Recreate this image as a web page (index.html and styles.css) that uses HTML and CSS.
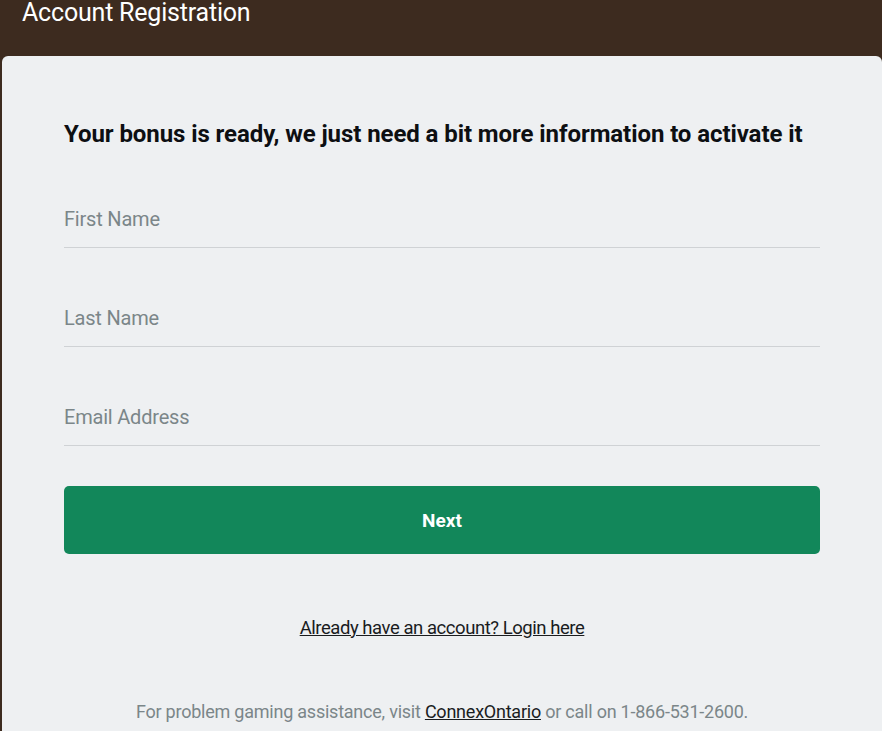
FILE: index.html
```html
<!DOCTYPE html>
<html lang="en">
<head>
<meta charset="utf-8">
<title>Account Registration</title>
<link rel="stylesheet" href="styles.css">
</head>
<body>
<header class="topbar">
  <h1 class="topbar-title">Account Registration</h1>
</header>
<main class="card">
  <h2 class="lead">Your bonus is ready, we just need a bit more information to activate it</h2>
  <form class="form">
    <input class="input" type="text" placeholder="First Name">
    <input class="input" type="text" placeholder="Last Name">
    <input class="input" type="email" placeholder="Email Address">
    <button class="btn" type="button">Next</button>
  </form>
  <p class="login"><a href="#">Already have an account? Login here</a></p>
  <p class="help">For problem gaming assistance, visit <a href="#">ConnexOntario</a> or call on 1-866-531-2600.</p>
</main>
</body>
</html>
```
FILE: styles.css
```css
* { box-sizing: border-box; }
html, body { margin: 0; padding: 0; }
body {
  background: #3d2b1f;
  font-family: Roboto, "Noto Sans", sans-serif;
  overflow: hidden;
  height: 731px;
}
.topbar {
  height: 56px;
  padding: 0 0 0 22px;
}
.topbar-title {
  margin: 0;
  color: #ffffff;
  font-weight: 400;
  font-size: 25px;
  line-height: 26px;
  letter-spacing: -0.2px;
}
.card {
  margin-left: 2px;
  width: 880px;
  height: 675px;
  background: #eef0f2;
  border-radius: 6px 6px 0 0;
  padding: 63px 62px 0;
}
.lead {
  margin: 0;
  font-size: 24px;
  line-height: 30px;
  font-weight: 700;
  color: #0d0f12;
  white-space: nowrap;
  letter-spacing: -0.08px;
}
.form {
  margin-top: 40px;
  display: flex;
  flex-direction: column;
  gap: 40px;
}
.input {
  width: 100%;
  height: 59px;
  border: 0;
  border-bottom: 1px solid #cfd2d5;
  background: transparent;
  font-family: inherit;
  font-size: 20px;
  letter-spacing: -0.2px;
  padding: 1px 0 0;
  color: #222;
  outline: none;
}
.input::placeholder { color: #7b8689; }
.btn {
  height: 68px;
  border: 0;
  border-radius: 5px;
  background: #12875a;
  color: #fff;
  font-family: inherit;
  font-weight: 700;
  font-size: 19px;
}
.login {
  margin: 60.7px 0 0;
  text-align: center;
  font-size: 18.5px;
  line-height: 26px;
  letter-spacing: -0.45px;
}
.login a { color: #1a1c1e; }
.help {
  margin: 58.5px 0 0;
  text-align: center;
  color: #7b8689;
  font-size: 18px;
  line-height: 26px;
  letter-spacing: -0.23px;
}
.help a { color: #1a1c1e; }
```
